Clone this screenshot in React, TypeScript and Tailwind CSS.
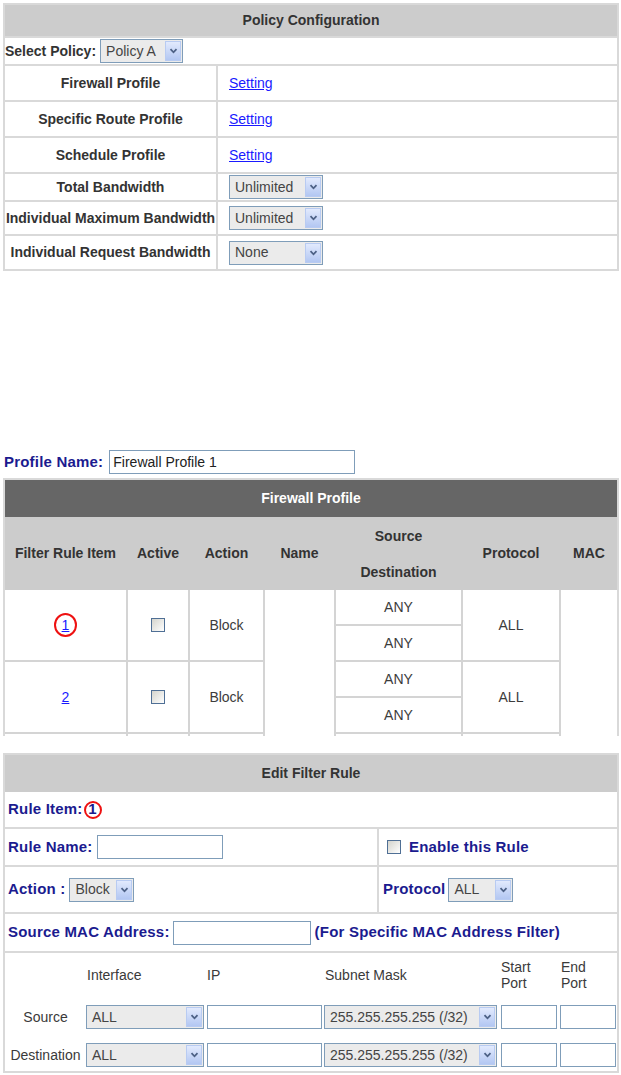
import React from 'react';

const navy = "text-[#1b1b8f] text-[15px] font-bold tracking-[0.2px]";

function Chevron() {
  return (
    <svg width="9" height="6" viewBox="0 0 9 6">
      <path d="M1.5 1.2 L4.5 4.3 L7.5 1.2" fill="none" stroke="#4d6185" strokeWidth="1.8" />
    </svg>
  );
}

function Sel({ className = '', value }: { className?: string; value: string }) {
  return (
    <div className={`flex h-[24px] shrink-0 border border-[#7f9db9] bg-[#ebebeb] p-[1px] ${className}`}>
      <span className="flex flex-1 items-center overflow-hidden whitespace-nowrap pl-[4px] text-[14px] font-normal tracking-normal text-[#444]">
        {value}
      </span>
      <span className="flex w-[16px] items-center justify-center border border-[#b8cbf2] bg-linear-to-b from-[#e2eafd] to-[#b3c7f2]">
        <Chevron />
      </span>
    </div>
  );
}

function Box({ className = '', value = '' }: { className?: string; value?: string }) {
  return (
    <div className={`flex h-[24px] shrink-0 items-center border border-[#7f9db9] bg-white pl-[3px] text-[14px] font-normal tracking-normal text-[#222] ${className}`}>
      {value}
    </div>
  );
}

function Check() {
  return <span className="inline-block h-[14px] w-[14px] shrink-0 border border-[#4f6f95] bg-linear-to-br from-[#d4d4cd] to-white" />;
}

const policyRows = [
  { label: 'Firewall Profile', h: 'h-[36px]', kind: 'link', value: 'Setting' },
  { label: 'Specific Route Profile', h: 'h-[36px]', kind: 'link', value: 'Setting' },
  { label: 'Schedule Profile', h: 'h-[36px]', kind: 'link', value: 'Setting' },
  { label: 'Total Bandwidth', h: 'h-[28px]', kind: 'select', value: 'Unlimited' },
  { label: 'Individual Maximum Bandwidth', h: 'h-[34px]', kind: 'select', value: 'Unlimited' },
  { label: 'Individual Request Bandwidth', h: 'h-[35px]', kind: 'select', value: 'None' },
];

// third row only peeks in under the crop, so it carries no text
const ruleRows = [
  { n: '1', circled: true, shown: true, a: 'row-start-1', b: 'row-start-2' },
  { n: '2', circled: false, shown: true, a: 'row-start-3', b: 'row-start-4' },
  { n: '3', circled: false, shown: false, a: 'row-start-5', b: 'row-start-6' },
];

export default function App() {
  return (
    <div className="min-h-[1075px] w-[621px] bg-white pl-[3px] pr-[2px] pt-[3px] font-['Liberation_Sans',Arial,sans-serif] text-[14px] text-[#333]">
      {/* policy configuration */}
      <div className="border-2 border-[#d9d9d9]">
        <div className="flex h-[31px] items-center justify-center bg-[#cccccc] font-bold">Policy Configuration</div>
        <div className="flex h-[28px] items-center gap-[4px] border-t-2 border-[#d9d9d9]">
          <span className="font-bold">Select Policy:</span>
          <Sel className="h-[23px] w-[83px]" value="Policy A" />
        </div>
        {policyRows.map((r) => (
          <div key={r.label} className={`flex border-t-2 border-[#d9d9d9] ${r.h}`}>
            <div className="flex w-[213px] shrink-0 items-center justify-center border-r-2 border-[#d9d9d9] font-bold whitespace-nowrap">
              {r.label}
            </div>
            <div className="flex flex-1 items-center pl-[11px]">
              {r.kind === 'link' ? (
                <span className="text-[#1a1aff] underline">{r.value}</span>
              ) : (
                <Sel className="w-[94px]" value={r.value} />
              )}
            </div>
          </div>
        ))}
      </div>

      {/* firewall profile list */}
      <div className="ml-[1px] mt-[179px] flex h-[24px] items-center gap-[6px]">
        <span className={navy}>Profile Name:</span>
        <Box className="w-[246px]" value="Firewall Profile 1" />
      </div>
      <div className="mt-[4px] h-[258px] overflow-hidden border-x-2 border-t-2 border-[#d9d9d9]">
        <div className="flex h-[37px] items-center justify-center bg-[#666666] font-bold text-white">Firewall Profile</div>
        <div className="grid h-[73px] grid-cols-[121px_60px_73px_69px_125px_96px_56px] gap-x-[2px] bg-[#cccccc] font-bold">
          <div className="flex items-center justify-center whitespace-nowrap">Filter Rule Item</div>
          <div className="flex items-center justify-center">Active</div>
          <div className="flex items-center justify-center">Action</div>
          <div className="flex items-center justify-center">Name</div>
          <div className="flex flex-col items-center justify-center leading-[36px]">
            <span>Source</span>
            <span>Destination</span>
          </div>
          <div className="flex items-center justify-center">Protocol</div>
          <div className="flex items-center justify-center">MAC</div>
        </div>
        <div className="grid grid-cols-[121px_60px_73px_69px_125px_96px_56px] grid-rows-[34px_34px_34px_34px_34px_34px] gap-[2px] bg-[#d4d4d4] text-[#3c3c3c]">
          <div className="col-start-4 row-span-6 row-start-1 bg-white" />
          <div className="col-start-7 row-span-6 row-start-1 bg-white" />
          {ruleRows.map((r) => (
            <React.Fragment key={r.n}>
              <div className={`col-start-1 row-span-2 flex items-center justify-center bg-white ${r.a}`}>
                {r.shown &&
                  (r.circled ? (
                    <span className="flex h-[24px] w-[23px] items-center justify-center rounded-[50%] border-2 border-[#ee1111]">
                      <span className="text-[#1a1aff] underline">{r.n}</span>
                    </span>
                  ) : (
                    <span className="text-[#1a1aff] underline">{r.n}</span>
                  ))}
              </div>
              <div className={`col-start-2 row-span-2 flex items-center justify-center bg-white ${r.a}`}>
                {r.shown && <Check />}
              </div>
              <div className={`col-start-3 row-span-2 flex items-center justify-center bg-white ${r.a}`}>{r.shown && 'Block'}</div>
              <div className={`col-start-5 flex items-center justify-center bg-white ${r.a}`}>{r.shown && 'ANY'}</div>
              <div className={`col-start-5 flex items-center justify-center bg-white ${r.b}`}>{r.shown && 'ANY'}</div>
              <div className={`col-start-6 row-span-2 flex items-center justify-center bg-white ${r.a}`}>{r.shown && 'ALL'}</div>
            </React.Fragment>
          ))}
        </div>
      </div>

      {/* edit filter rule */}
      <div className="mt-[17px] border-2 border-[#d9d9d9]">
        <div className="flex h-[37px] items-center justify-center bg-[#cccccc] font-bold">Edit Filter Rule</div>
        <div className="flex h-[35px] items-center pl-[3px]">
          <span className={navy}>Rule Item:</span>
          <span className={`ml-[1px] flex h-[18px] w-[18px] items-center justify-center rounded-[50%] border-2 border-[#ee1111] ${navy}`}>1</span>
        </div>
        <div className="flex h-[38px] border-t-2 border-[#d9d9d9]">
          <div className="flex w-[374px] shrink-0 items-center gap-[4px] border-r-2 border-[#d9d9d9] pl-[3px]">
            <span className={navy}>Rule Name:</span>
            <Box className="h-[23px] w-[126px]" />
          </div>
          <div className="flex flex-1 items-center gap-[8px] pl-[8px]">
            <Check />
            <span className={navy}>Enable this Rule</span>
          </div>
        </div>
        <div className="flex h-[47px] border-t-2 border-[#d9d9d9]">
          <div className="flex w-[374px] shrink-0 items-center gap-[4px] border-r-2 border-[#d9d9d9] pl-[3px]">
            <span className={navy}>Action :</span>
            <Sel className="w-[65px]" value="Block" />
          </div>
          <div className="flex flex-1 items-center gap-[3px] pl-[4px]">
            <span className={navy}>Protocol</span>
            <Sel className="w-[65px]" value="ALL" />
          </div>
        </div>
        <div className="flex h-[39px] items-center border-t-2 border-[#d9d9d9] pl-[3px]">
          <span className={navy}>Source MAC Address:</span>
          <Box className="ml-[3px] w-[138px]" />
          <span className={`ml-[4px] ${navy}`}>(For Specific MAC Address Filter)</span>
        </div>
        <div className="border-t-2 border-[#d9d9d9] pb-[3px] pt-[4px] text-[#3a3a3a]">
          <div className="grid h-[36px] grid-cols-[81px_120px_117px_177px_59px_58px] items-center leading-[16px]">
            <span />
            <span className="pl-[1px]">Interface</span>
            <span className="pl-[1px]">IP</span>
            <span className="pl-[2px]">Subnet Mask</span>
            <span className="pl-[1px]">Start<br />Port</span>
            <span className="pl-[2px]">End<br />Port</span>
          </div>
          {['Source', 'Destination'].map((label, i) => (
            <div
              key={label}
              className={`grid h-[26px] grid-cols-[81px_120px_117px_177px_59px_58px] items-center ${i === 0 ? 'mt-[11px]' : 'mt-[12px]'}`}
            >
              <span className="text-center">{label}</span>
              <Sel className="w-[118px]" value="ALL" />
              <Box className="ml-[1px] w-[115px]" />
              <Sel className="ml-[1px] w-[173px]" value="255.255.255.255 (/32)" />
              <Box className="ml-[1px] w-[56px]" />
              <Box className="ml-[1px] w-[56px]" />
            </div>
          ))}
        </div>
      </div>
    </div>
  );
}
